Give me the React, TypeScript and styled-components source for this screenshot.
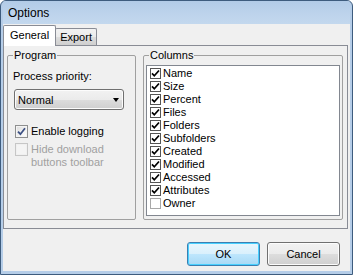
import styled, { createGlobalStyle } from 'styled-components';

const GlobalStyle = createGlobalStyle`
  html, body {
    margin: 0;
    padding: 0;
    background: #ffffff;
  }
  body {
    font-family: "Liberation Sans", Arial, sans-serif;
    font-size: 11px;
    color: #000000;
  }
  * {
    box-sizing: border-box;
  }
`;

const Window = styled.div`
  width: 353px;
  height: 275px;
  display: flex;
  flex-direction: column;
  border: 1px solid #3e5c7e;
  border-radius: 6px 6px 0 0;
  background: #b5cde8;
  padding: 0 2px 3px 2px;
  overflow: hidden;
`;

const TitleBar = styled.div`
  height: 23px;
  flex: none;
  display: flex;
  align-items: center;
  padding: 1px 0 0 5px;
  font-size: 12px;
  background: linear-gradient(180deg, #b2cbe7 0%, #bed4ec 60%, #c3d8ee 100%);
`;

const Body = styled.div`
  flex: 1;
  display: flex;
  flex-direction: column;
  background: #f0f0f0;
  padding-top: 1px;
`;

const TabStrip = styled.div`
  display: flex;
  align-items: flex-end;
  height: 20px;
`;

const Tab = styled.div<{ $active?: boolean }>`
  position: relative;
  z-index: ${({ $active }) => ($active ? 2 : 1)};
  height: ${({ $active }) => ($active ? '21px' : '17px')};
  margin-bottom: ${({ $active }) => ($active ? '-1px' : '0')};
  margin-left: ${({ $active }) => ($active ? '0' : '-1px')};
  padding: ${({ $active }) => ($active ? '2px 6px 0 6px' : '1px 4px 0 4px')};
  line-height: 14px;
  border: 1px solid #898c95;
  border-bottom: none;
  border-radius: 2px 2px 0 0;
  background: ${({ $active }) =>
    $active ? '#ffffff' : 'linear-gradient(180deg, #f2f2f2 0%, #ebebeb 50%, #dddddd 51%, #cfcfcf 100%)'};
`;

const Pane = styled.div`
  height: 184px;
  margin-right: 2px;
  display: flex;
  gap: 7px;
  padding: 3px 4px 8px 3px;
  border: 1px solid #898c95;
  background: #f0f0f0;
`;

const GroupBox = styled.fieldset<{ $width: number; $pad: number }>`
  width: ${({ $width }) => $width}px;
  margin: 0;
  padding: 0 ${({ $pad }) => $pad}px 3px ${({ $pad }) => $pad}px;
  border: 1px solid #a0a0a0;
  border-radius: 2px;
  display: flex;
  flex-direction: column;
  min-width: 0;
`;

const Legend = styled.legend<{ $shift: number }>`
  padding: 0 1px;
  margin-left: ${({ $shift }) => $shift}px;
  line-height: 13px;
`;

const FieldLabel = styled.div`
  margin-top: 7px;
  line-height: 14px;
`;

const Select = styled.div`
  position: relative;
  margin: 6px 0 0 1px;
  width: 110px;
  height: 21px;
  display: flex;
  align-items: center;
  padding-left: 3px;
  border: 1px solid #707070;
  border-radius: 3px;
  box-shadow: inset 0 0 0 1px #fcfcfc;
  background: linear-gradient(180deg, #f2f2f2 0%, #ebebeb 50%, #dddddd 51%, #cfcfcf 100%);
`;

const Arrow = styled.span`
  margin-left: auto;
  margin-right: 4px;
  width: 0;
  height: 0;
  border-left: 3.5px solid transparent;
  border-right: 3.5px solid transparent;
  border-top: 4px solid #000000;
`;

const CheckRow = styled.div<{ $top: number }>`
  display: flex;
  align-items: flex-start;
  gap: 3px;
  margin: ${({ $top }) => $top}px 0 0 2px;
`;

const CheckText = styled.div<{ $disabled?: boolean }>`
  line-height: 13px;
  color: ${({ $disabled }) => ($disabled ? '#a0a0a0' : '#000000')};
  padding-top: 0;
`;

const ThemedBox = styled.div<{ $disabled?: boolean }>`
  width: 13px;
  height: 13px;
  flex: none;
  border: 1px solid ${({ $disabled }) => ($disabled ? '#c6c6c6' : '#8e8f8f')};
  background: ${({ $disabled }) =>
    $disabled ? '#f4f4f4' : 'linear-gradient(135deg, #dcdcdc 0%, #f2f2f2 60%, #ffffff 100%)'};
  box-shadow: inset 0 0 0 1px ${({ $disabled }) => ($disabled ? '#f0f0f0' : '#f4f4f4')};
  display: flex;
  align-items: center;
  justify-content: center;
`;

const ListBox = styled.div`
  flex: 1;
  margin-top: 3px;
  padding-top: 1px;
  border: 1px solid #828790;
  background: #ffffff;
`;

const ListItem = styled.div`
  height: 13px;
  display: flex;
  align-items: center;
  gap: 2px;
  padding-left: 3px;
  line-height: 13px;
`;

const FlatBox = styled.div<{ $checked: boolean }>`
  width: 11px;
  height: 11px;
  flex: none;
  border: 1px solid ${({ $checked }) => ($checked ? '#555555' : '#a8a8a8')};
  background: #ffffff;
  display: flex;
  align-items: center;
  justify-content: center;
`;

const ButtonRow = styled.div`
  display: flex;
  justify-content: flex-end;
  gap: 7px;
  margin-top: 13px;
  padding-right: 10px;
`;

const Button = styled.div<{ $default?: boolean }>`
  width: 73px;
  height: 24px;
  display: flex;
  align-items: center;
  justify-content: center;
  border: 1px solid ${({ $default }) => ($default ? '#3c7fb1' : '#707070')};
  border-radius: 3px;
  box-shadow: inset 0 0 0 1px ${({ $default }) => ($default ? '#48d0ff' : '#fcfcfc')};
  background: ${({ $default }) =>
    $default
      ? 'linear-gradient(180deg, #eaf6fd 0%, #d9f0fc 50%, #bee6fd 51%, #a7d9f5 100%)'
      : 'linear-gradient(180deg, #f2f2f2 0%, #ebebeb 50%, #dddddd 51%, #cfcfcf 100%)'};
`;

const columns = [
  { name: 'Name', checked: true },
  { name: 'Size', checked: true },
  { name: 'Percent', checked: true },
  { name: 'Files', checked: true },
  { name: 'Folders', checked: true },
  { name: 'Subfolders', checked: true },
  { name: 'Created', checked: true },
  { name: 'Modified', checked: true },
  { name: 'Accessed', checked: true },
  { name: 'Attributes', checked: true },
  { name: 'Owner', checked: false },
];

const BlueCheck = () => (
  <svg width="9" height="9" viewBox="0 0 9 9">
    <path d="M1 4.6 L3.4 7.2 L8 1.2" fill="none" stroke="#3d5184" strokeWidth="1.8" />
  </svg>
);

const BlackCheck = () => (
  <svg width="9" height="9" viewBox="0 0 9 9">
    <path d="M1 4.3 L3.3 6.8 L8 1.5" fill="none" stroke="#000000" strokeWidth="1.7" />
  </svg>
);

export default function App() {
  return (
    <>
      <GlobalStyle />
      <Window>
        <TitleBar>Options</TitleBar>
        <Body>
          <TabStrip>
            <Tab $active>General</Tab>
            <Tab>Export</Tab>
          </TabStrip>
          <Pane>
            <GroupBox $width={129} $pad={5}>
              <Legend $shift={0}>Program</Legend>
              <FieldLabel>Process priority:</FieldLabel>
              <Select>
                Normal
                <Arrow />
              </Select>
              <CheckRow $top={15}>
                <ThemedBox>
                  <BlueCheck />
                </ThemedBox>
                <CheckText>Enable logging</CheckText>
              </CheckRow>
              <CheckRow $top={5}>
                <ThemedBox $disabled />
                <CheckText $disabled>
                  Hide download
                  <br />
                  buttons toolbar
                </CheckText>
              </CheckRow>
            </GroupBox>
            <GroupBox $width={200} $pad={2}>
              <Legend $shift={3}>Columns</Legend>
              <ListBox>
                {columns.map((c) => (
                  <ListItem key={c.name}>
                    <FlatBox $checked={c.checked}>{c.checked && <BlackCheck />}</FlatBox>
                    {c.name}
                  </ListItem>
                ))}
              </ListBox>
            </GroupBox>
          </Pane>
          <ButtonRow>
            <Button $default>OK</Button>
            <Button>Cancel</Button>
          </ButtonRow>
        </Body>
      </Window>
    </>
  );
}
